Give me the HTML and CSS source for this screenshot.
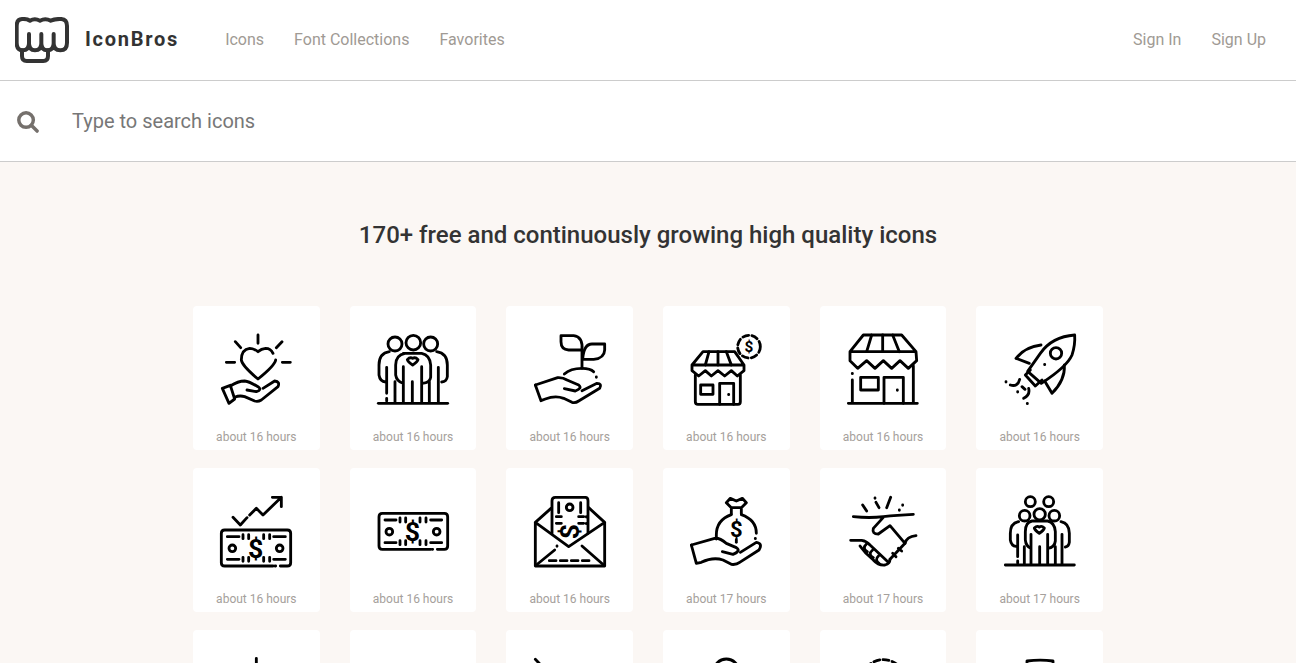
FILE: index.html
```html
<!DOCTYPE html>
<html lang="en">

<head>
    <title>IconBros</title>
    <link rel="stylesheet" href="styles.css">
</head>

<body>
    <div class="header">
        <a href="#" class="brand">
            <svg class="brand-logo" viewBox="45 51 162 138">
                <path d="M50 78 Q50 58 66 57 Q80 56 90 62 Q104 54 120 62 Q136 54 152 62 Q166 56 184 57 Q201 58 201 78 L201 128 Q201 151 181 151 Q161 151 161 130 L161 102 L161 130 Q161 151 142 151 Q124 151 124 130 L124 102 L124 130 Q124 151 105 151 Q87 151 87 130 L87 102 L87 130 Q87 151 68 151 Q50 151 50 128 Z" />
                <path d="M66 151 L66 168 Q66 183 80 183 L130 183 Q144 183 144 168 L144 151" />
            </svg>
            <span class="brand-name">IconBros</span>
        </a>
        <div class="nav">
            <a href="#">Icons</a>
            <a href="#">Font Collections</a>
            <a href="#">Favorites</a>
        </div>
        <div class="nav nav-right">
            <a href="#">Sign In</a>
            <a href="#">Sign Up</a>
        </div>
    </div>

    <div class="search">
        <svg class="search-icon" viewBox="0 0 24 24">
            <circle cx="10.5" cy="10.5" r="7.6" />
            <path d="M16 16 L22 22" />
        </svg>
        <input class="search-input" type="text" placeholder="Type to search icons" />
    </div>

    <div class="main">
        <h1 class="title">170+ free and continuously growing high quality icons</h1>

        <div class="grid">
            <!-- icon paths are in 3x units, each viewBox is the icon's own 216 square -->
            <div class="card">
                <svg class="icon" viewBox="91 102 216 216">
                    <path d="M205 105 V130 M137 125 L153 143 M277 125 L260 143 M110 187 H135 M278 187 H302" />
                    <path d="M205 155 Q192 145 180 145 Q155 148 155 180 Q157 197 205 237 Q255 197 258 180 M250 160 Q243 145 228 145 Q215 146 205 155" />
                    <path d="M98 265 L122 256 L135 297 L118 310 Z M122 258 Q145 243 165 243 Q180 245 205 260 Q218 270 200 275 L172 270" />
                    <path d="M135 292 Q150 285 165 290 L195 303 Q205 306 215 300 L265 260 Q272 245 255 243 L220 265" />
                </svg>
                <p class="time">about 16 hours</p>
            </div>
            <div class="card">
                <svg class="icon" viewBox="561 102 216 216">
                    <circle cx="615" cy="132" r="21" />
                    <circle cx="670" cy="128" r="22" />
                    <circle cx="722" cy="132" r="21" />
                    <path d="M565 310 H773" />
                    <path d="M598 155 Q567 160 567 195 V225 Q570 245 587 246 M590 202 V280 M590 295 V303 M615 245 V305" />
                    <path d="M640 160 L695 160 Q720 165 722 195 V232 Q720 248 697 250 M645 160 Q617 165 617 195 V225 Q620 245 640 250 M640 200 V305 M695 200 V305 M667 245 V305" />
                    <path d="M740 155 Q772 160 772 195 V230 Q770 245 755 246 M745 202 V305 M718 245 V305" />
                    <path d="M652 179 Q660 170 668 175 Q676 170 684 179 Q682 186 668 195 Q654 186 652 179 Z" />
                </svg>
                <p class="time">about 16 hours</p>
            </div>
            <div class="card">
                <svg class="icon" viewBox="101 102 216 216">
                    <path d="M245 150 V205 M245 150 H205 Q182 148 182 125 V107 H220 Q248 110 245 150 Z" />
                    <path d="M247 178 H280 Q312 175 313 150 V132 H275 Q250 132 247 178 Z" />
                    <path d="M192 222 Q210 205 245 205 Q270 205 280 215 M288 231 V232" />
                    <path d="M105 255 L172 233 Q188 232 200 240 L235 255 Q247 265 225 273 L192 266" />
                    <path d="M105 255 L122 302 L135 297 Q165 285 190 295 L215 307 Q225 310 235 303 L298 265 Q306 250 290 250 L245 272" />
                </svg>
                <p class="time">about 16 hours</p>
            </div>
            <div class="card">
                <svg class="icon" viewBox="571 102 216 216">
                    <circle class="dashed" cx="748" cy="140" r="34" />
                    <text class="dollar dollar-sm" x="748" y="157">$</text>
                    <path d="M610 155 H705 L733 195 V212 L713 228 L695 212 L675 228 L655 212 L635 228 L617 212 L597 228 L577 212 V195 Z M577 195 H733" />
                    <path d="M628 155 L617 195 M655 155 V195 M680 155 L695 195" />
                    <path d="M587 225 V305 Q587 313 595 313 H715 Q722 313 722 305 V225" />
                    <path d="M603 255 H640 V283 H603 Z M660 313 V250 H702 V313 M687 283 V284" />
                </svg>
                <p class="time">about 16 hours</p>
            </div>
            <div class="card">
                <svg class="icon" viewBox="111 102 216 216">
                    <path d="M160 105 H275 L318 155 L320 182 L295 205 L270 182 L245 205 L220 182 L195 205 L170 182 L143 205 L120 182 V155 Z M120 155 H318" />
                    <path d="M185 105 L170 155 M218 105 V155 M248 105 L268 155" />
                    <path d="M127 220 V221 M127 240 V308 M310 197 V308 M115 310 H322" />
                    <path d="M152 232 H205 V270 H152 Z M222 310 V232 H280 V310 M262 270 V271" />
                </svg>
                <p class="time">about 16 hours</p>
            </div>
            <div class="card">
                <svg class="icon" viewBox="581 102 216 216">
                    <path d="M793 105 Q725 110 690 160 L652 214 L693 250 Q770 200 785 165 Q795 135 793 105 Z" />
                    <circle cx="737" cy="160" r="17" />
                    <path d="M692 135 Q645 140 617 175 L657 190" />
                    <path d="M762 195 Q765 240 725 280 L703 243" />
                    <path d="M660 210 L645 225 L675 258 L695 240 M703 193 V194" />
                    <path d="M587 245 V246 M600 255 Q622 262 628 238 M622 275 V276 M635 260 L644 268 M640 295 Q660 285 655 265 M651 310 V311" />
                </svg>
                <p class="time">about 16 hours</p>
            </div>

            <div class="card">
                <svg class="icon" viewBox="91 93 216 216">
                    <path d="M130 157 L152 180 L172 158 M180 150 L200 130 L220 150 L275 97 M248 97 H275 V125" />
                    <path d="M250 303 H105 Q95 303 95 293 V205 Q95 195 105 195 H293 Q303 195 303 205 V293 Q303 303 293 303 H272 M256 303 H258" />
                    <path d="M113 215 H148 M160 209 V221 M177 209 V221 M222 209 V221 M240 209 V221 M252 215 H287" />
                    <path d="M113 283 H148 M160 277 V289 M177 277 V289 M222 277 V289 M240 277 V289 M252 283 H287" />
                    <circle cx="128" cy="250" r="10" />
                    <circle cx="270" cy="250" r="10" />
                    <text class="dollar" x="198" y="279">$</text>
                </svg>
                <p class="time">about 16 hours</p>
            </div>
            <div class="card">
                <svg class="icon" viewBox="561 93 216 216">
                    <path d="M722 253 H577 Q567 253 567 243 V155 Q567 145 577 145 H763 Q773 145 773 155 V243 Q773 253 763 253 H742 M726 253 H728" />
                    <path d="M585 165 H618 M630 159 V171 M647 159 V171 M690 159 V171 M708 159 V171 M722 165 H755" />
                    <path d="M585 233 H618 M630 227 V239 M647 227 V239 M690 227 V239 M708 227 V239 M722 233 H755" />
                    <circle cx="598" cy="200" r="10" />
                    <circle cx="740" cy="200" r="10" />
                    <text class="dollar" x="667" y="229">$</text>
                </svg>
                <p class="time">about 16 hours</p>
            </div>
            <div class="card">
                <svg class="icon" viewBox="101 93 216 216">
                    <path d="M105 172 V303 H313 V172 L265 128 M105 172 L152 130 M105 172 L205 245 L313 172" />
                    <path d="M108 300 L163 255 M170 243 V244 M245 243 L310 300" />
                    <path d="M147 287 H270" stroke-dasharray="20 13" />
                    <path d="M155 205 V107 Q155 97 165 97 H255 Q263 97 263 107 V205" />
                    <circle cx="208" cy="127" r="10" />
                    <path d="M175 113 V143 M241 113 V143 M168 155 H183 M168 175 H183 M235 155 H250 M235 175 H250 M258 155 V156 M258 175 V176" />
                    <text class="dollar" x="208" y="228" transform="rotate(-90 208 200)">$</text>
                </svg>
                <p class="time">about 16 hours</p>
            </div>
            <div class="card">
                <svg class="icon" viewBox="571 93 216 216">
                    <path d="M692 100 L680 113 L695 128 H725 L740 113 L728 100 L710 108 Z M695 128 V147 M725 128 V147" />
                    <path d="M695 149 Q650 165 650 210 V222 M725 149 Q770 165 770 205 M767 220 V221" />
                    <text class="dollar dollar-md" x="710" y="217">$</text>
                    <path d="M710 224 V232" />
                    <path d="M575 240 L645 220 Q660 218 680 235 L710 248 Q725 258 700 268 L668 260" />
                    <path d="M575 240 L590 295 L605 292 Q640 275 670 285 L695 298 Q710 300 720 292 L778 255 Q790 235 770 232 L722 262" />
                </svg>
                <p class="time">about 17 hours</p>
            </div>
            <div class="card">
                <svg class="icon" viewBox="111 93 216 216">
                    <path d="M158 120 L170 138 M195 99 V100 M198 112 L207 128 M242 97 L230 128 M278 120 V121 M268 135 V136" />
                    <path d="M130 155 Q180 160 220 155 Q260 150 310 148 M220 157 L190 190 Q185 207 205 207 L240 182 L285 235 Q290 215 318 212" />
                    <path d="M122 226 H155 Q170 228 180 240 L235 292 M150 243 Q165 265 190 285 Q205 302 225 300 Q240 296 240 283" />
                    <path d="M170 236 Q155 250 172 260 M188 255 Q172 268 190 278 M206 272 Q192 285 208 296" />
                    <path d="M285 235 L240 283 M248 265 L258 275 M265 250 L275 258" />
                </svg>
                <p class="time">about 17 hours</p>
            </div>
            <div class="card">
                <svg class="icon" viewBox="581 93 216 216">
                    <circle cx="660" cy="110" r="15" />
                    <circle cx="715" cy="110" r="15" />
                    <circle cx="643" cy="152" r="16" />
                    <circle cx="688" cy="148" r="17" />
                    <circle cx="732" cy="152" r="16" />
                    <path d="M585 300 H792" />
                    <path d="M625 170 Q600 175 600 205 V225 Q603 243 617 244 M622 210 V275 M622 288 V295 M642 245 V298" />
                    <path d="M665 168 H712 Q733 172 735 200 V228 Q733 248 712 250 M665 168 Q645 172 645 200 V225 Q647 245 662 250 M662 208 V298 M712 208 V298 M688 245 V298" />
                    <path d="M752 170 Q777 175 777 205 V232 Q775 245 765 246 M755 208 V298 M735 245 V298" />
                    <path d="M672 189 Q680 181 687 186 Q694 181 702 189 Q700 196 687 205 Q674 196 672 189 Z" />
                </svg>
                <p class="time">about 17 hours</p>
            </div>

            <!-- third row is cut off by the window, only the tops of the icons show -->
            <div class="card">
                <svg class="icon" viewBox="91 99 216 216">
                    <path d="M200 100 V150 M150 200 H250" />
                </svg>
            </div>
            <div class="card">
                <svg class="icon" viewBox="561 99 216 216">
                    <circle cx="669" cy="220" r="60" />
                </svg>
            </div>
            <div class="card">
                <svg class="icon" viewBox="1031 99 216 216">
                    <path d="M1035 103 L1100 170 V280" />
                </svg>
            </div>
            <div class="card">
                <svg class="icon" viewBox="121 99 216 216">
                    <circle cx="230" cy="140" r="38" />
                </svg>
            </div>
            <div class="card">
                <svg class="icon" viewBox="591 99 216 216">
                    <circle class="dashed" cx="700" cy="170" r="66" />
                </svg>
            </div>
            <div class="card">
                <svg class="icon" viewBox="1061 99 216 216">
                    <path d="M1130 108 Q1170 103 1208 108 V280 H1130 Z" />
                </svg>
            </div>
        </div>
    </div>
</body>

</html>
```

FILE: styles.css
```css
body {
    font-family: Roboto, "Liberation Sans", sans-serif;
    background-color: #fbf7f4;
    margin: 0;
    padding: 0;
    height: 100vh;
    overflow: hidden;
}

a {
    text-decoration: none;
}

.header {
    display: flex;
    align-items: center;
    height: 80px;
    padding: 0 30px 0 15px;
    background-color: #fff;
    border-bottom: 1px solid #ccc;
}

.brand {
    display: flex;
    align-items: center;
    gap: 16px;
    margin-right: 46px;
}

.brand-logo {
    width: 54px;
    height: 46px;
    fill: none;
    stroke: #333;
    stroke-width: 12;
    stroke-linejoin: round;
    stroke-linecap: round;
}

.brand-name {
    font-size: 20px;
    font-weight: 700;
    letter-spacing: 1.75px;
    color: #333;
    padding-bottom: 2px;
}

.nav {
    display: flex;
    gap: 30px;
    padding-bottom: 2px;
}

.nav a {
    font-size: 16px;
    color: #a09a94;
}

.nav-right {
    margin-left: auto;
}

.search {
    display: flex;
    align-items: center;
    height: 80px;
    padding: 0 30px 0 16px;
    background-color: #fff;
    border-bottom: 1px solid #ccc;
}

.search-icon {
    width: 23px;
    height: 23px;
    flex: none;
    fill: none;
    stroke: #75706c;
    stroke-width: 3.6;
    stroke-linecap: round;
    margin-right: 33px;
}

.search-input {
    flex: 1;
    border: none;
    outline: none;
    padding: 0;
    font-family: Roboto, "Liberation Sans", sans-serif;
    font-size: 20px;
    color: #777;
}

.search-input::placeholder {
    color: #777;
    opacity: 1;
}

.main {
    width: 910px;
    margin: 0 auto;
    padding-top: 59px;
}

.title {
    margin: 0 0 57px;
    font-size: 24px;
    font-weight: 500;
    line-height: 28px;
    text-align: center;
    color: #333;
}

.grid {
    display: grid;
    grid-template-columns: repeat(6, 1fr);
    column-gap: 30px;
    row-gap: 18px;
}

.card {
    padding: 28px 0 6px;
    background-color: #fff;
    border-radius: 4px;
}

.icon {
    display: block;
    width: 72px;
    height: 72px;
    margin: 0 auto;
    overflow: visible;
    fill: none;
    stroke: #000;
    stroke-width: 8.5;
    stroke-linecap: round;
    stroke-linejoin: round;
}

.icon .dashed {
    stroke-dasharray: 18 10;
}

.icon .dollar {
    font-family: Roboto, "Liberation Sans", sans-serif;
    font-size: 80px;
    font-weight: 700;
    text-anchor: middle;
    fill: #000;
    stroke: none;
}

.icon .dollar-sm {
    font-size: 46px;
}

.icon .dollar-md {
    font-size: 66px;
}

.time {
    margin: 24px 0 0;
    font-size: 12px;
    line-height: 14px;
    text-align: center;
    color: #a5a09b;
}
```
